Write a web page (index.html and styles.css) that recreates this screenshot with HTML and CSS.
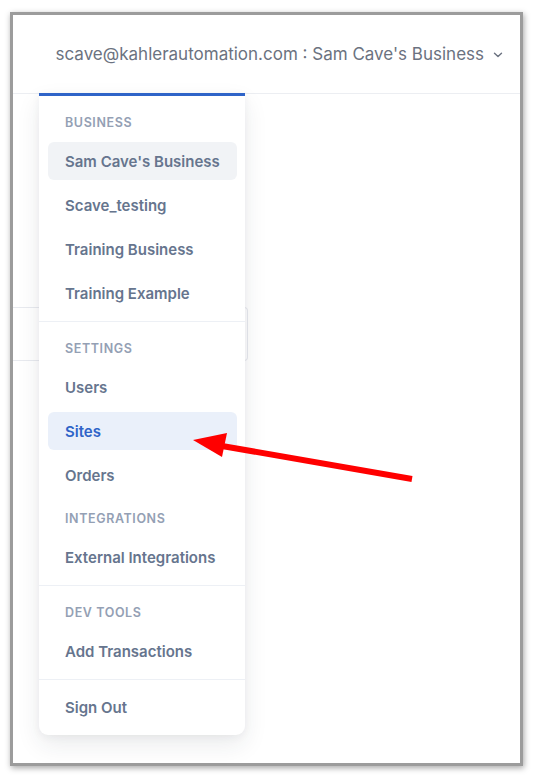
FILE: index.html
```html
<!DOCTYPE html>
<html lang="en">
<head>
<meta charset="utf-8">
<title>Account menu</title>
<link rel="stylesheet" href="styles.css">
</head>
<body>
<div class="frame">
  <header class="topbar">
    <button class="account">
      <span>scave@kahlerautomation.com : Sam Cave's Business</span>
      <svg class="chev" width="10" height="6" viewBox="0 0 10 6"><path d="M1.5 1.2 L5 4.6 L8.5 1.2" fill="none" stroke="#6b7280" stroke-width="1.4" stroke-linecap="round" stroke-linejoin="round"/></svg>
    </button>
  </header>
  <main class="content">
    <div class="bg-field"></div>
    <nav class="menu">
      <div class="section">
        <div class="label">BUSINESS</div>
        <div class="item active">Sam Cave's Business</div>
        <div class="item">Scave_testing</div>
        <div class="item">Training Business</div>
        <div class="item">Training Example</div>
      </div>
      <div class="section">
        <div class="label">SETTINGS</div>
        <div class="item">Users</div>
        <div class="item selected">Sites</div>
        <div class="item">Orders</div>
        <div class="label">INTEGRATIONS</div>
        <div class="item">External Integrations</div>
      </div>
      <div class="section">
        <div class="label">DEV TOOLS</div>
        <div class="item">Add Transactions</div>
      </div>
      <div class="section">
        <div class="item">Sign Out</div>
      </div>
    </nav>
  </main>
</div>
<svg class="arrow" width="534" height="780" viewBox="0 0 534 780">
  <line x1="412" y1="479" x2="222" y2="446" stroke="#ff0000" stroke-width="6"/>
  <polygon points="193,440 227,433 222,457" fill="#ff0000"/>
</svg>
</body>
</html>
```
FILE: styles.css
```css
html, body {
  margin: 0;
  padding: 0;
  background: #ffffff;
}
body {
  width: 534px;
  height: 780px;
  position: relative;
  overflow: hidden;
  font-family: Inter, "Noto Sans", sans-serif;
}
.frame {
  box-sizing: border-box;
  margin: 12px 0 0 10px;
  width: 513px;
  height: 754px;
  border: 3px solid #9c9c9c;
  box-shadow: 1px 2px 6px rgba(0, 0, 0, 0.35);
  background: #ffffff;
  display: flex;
  flex-direction: column;
}
.topbar {
  height: 78px;
  flex: none;
  border-bottom: 1px solid #eceef2;
  display: flex;
  align-items: center;
  justify-content: flex-end;
  padding-right: 17px;
}
.account {
  border: 0;
  background: none;
  padding: 0;
  font-family: Inter, "Noto Sans", sans-serif;
  font-size: 17px;
  color: #6b7280;
  display: flex;
  align-items: center;
  gap: 9px;
}
.chev {
  margin-top: 1px;
}
.content {
  position: relative;
  flex: 1;
}
.bg-field {
  box-sizing: border-box;
  margin: 213px 0 0 0;
  width: 235px;
  height: 54px;
  border: 1px solid #e8eaef;
  border-left: 0;
  border-radius: 0 4px 4px 0;
}
.menu {
  position: absolute;
  left: 26px;
  top: -1px;
  width: 206px;
  box-sizing: border-box;
  background: #ffffff;
  border-top: 3px solid #2f64c8;
  border-radius: 0 0 9px 9px;
  box-shadow: 0 10px 24px rgba(30, 41, 59, 0.09), 0 2px 8px rgba(30, 41, 59, 0.05);
}
.section {
  display: flex;
  flex-direction: column;
  gap: 6px;
  padding: 8px 8px 9px 9px;
  border-top: 1px solid #edf0f5;
}
.section:first-child {
  border-top: 0;
}
.label {
  box-sizing: border-box;
  height: 32px;
  padding: 5px 0 0 17px;
  display: flex;
  align-items: center;
  font-size: 12.5px;
  font-weight: 600;
  letter-spacing: 0.6px;
  color: #94a0b4;
}
.item {
  box-sizing: border-box;
  height: 38px;
  padding-left: 17px;
  display: flex;
  align-items: center;
  font-size: 15px;
  font-weight: 600;
  color: #66758e;
  border-radius: 6px;
}
.item.active {
  background: #f1f3f6;
}
.item.selected {
  background: #eaf0fa;
  color: #2f64c8;
}
.arrow {
  position: absolute;
  left: 0;
  top: 0;
  pointer-events: none;
}
```
